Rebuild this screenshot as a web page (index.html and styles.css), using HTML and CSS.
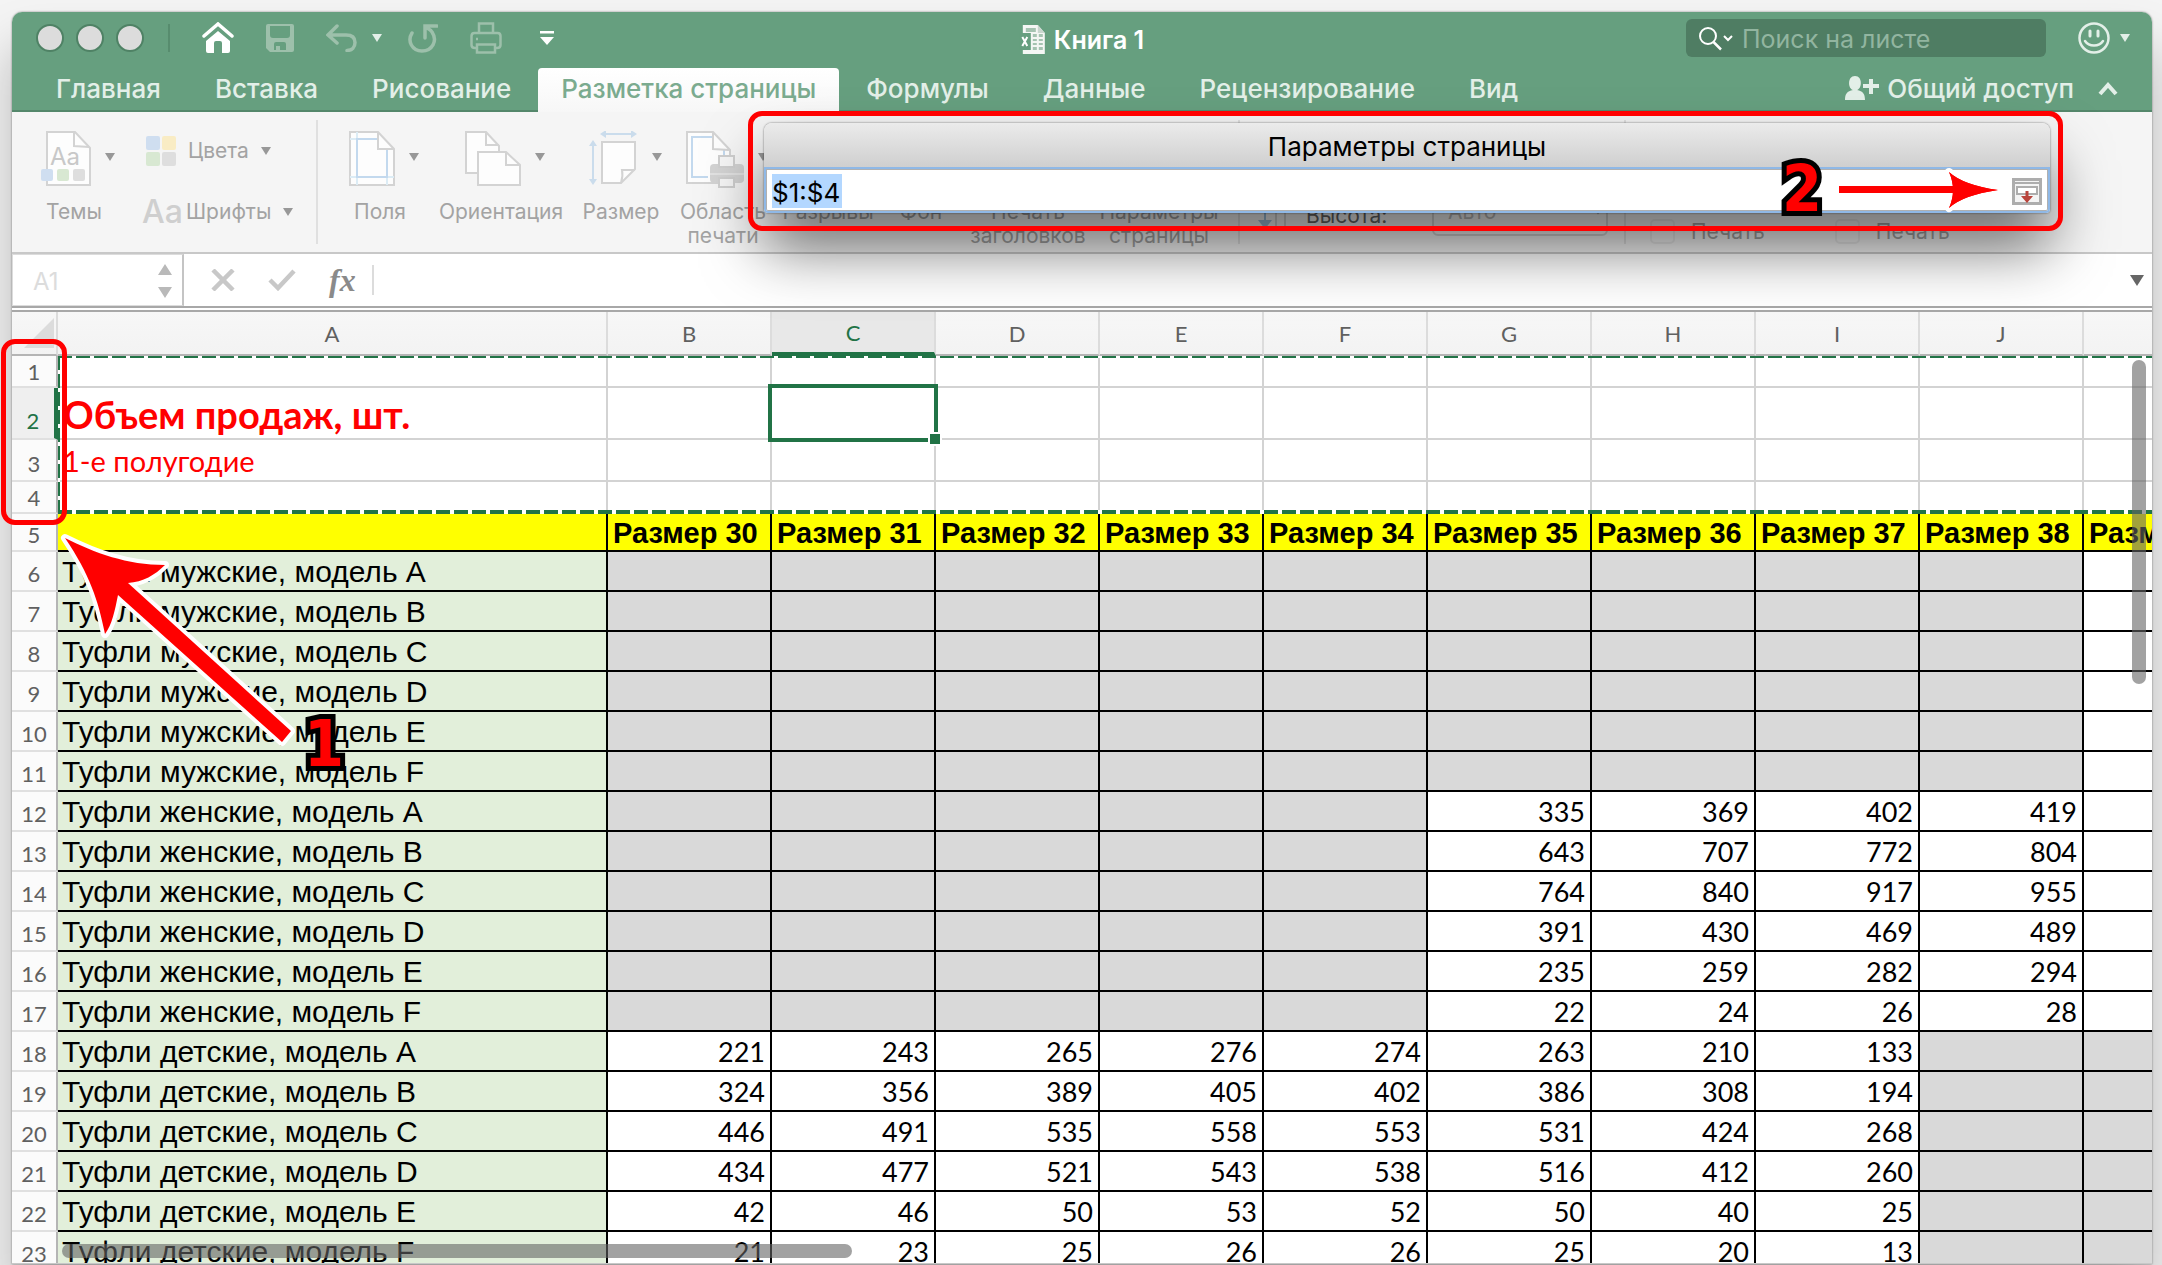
FILE: index.html
```html
<!DOCTYPE html>
<html lang="ru">
<head>
<meta charset="utf-8">
<title>Книга 1</title>
<link rel="stylesheet" href="styles.css">
</head>
<body>
<div class="window">
  <header class="titlebar">
    <div class="top-row">
      <div class="lights"><span class="light"></span><span class="light"></span><span class="light"></span></div>
      <div class="quick">
        <button class="icon-btn" aria-label="Домой"><svg width="32" height="32" viewBox="0 0 32 32"><path d="M2 14 16 2l14 12" fill="none" stroke="#fff" stroke-width="3.500" stroke-linecap="round"/><path d="M16 9 4 19v10q0 2 2 2h6V21q0-2 2-2h4q2 0 2 2v10h6q2 0 2-2V19z" fill="#fff"/></svg></button>
        <button class="icon-btn" aria-label="Сохранить"><svg width="28" height="28" viewBox="0 0 28 28"><path fill-rule="evenodd" d="M2 0h24q2 0 2 2v24q0 2-2 2H4l-4-4V2q0-2 2-2zm2 2v9q0 3 3 3h14q3 0 3-3V2zm6 16q-2 0-2 2v6h2v-4h4v4h6v-6q0-2-2-2z" fill="#9dc0ab"/></svg></button>
        <button class="icon-btn undo" aria-label="Отменить"><svg width="32" height="28" viewBox="0 0 32 28" fill="none" stroke="#9dc0ab" stroke-width="3.500" stroke-linecap="round"><path d="M11 2 2 11l9 8M3 11h17c6 0 9 3 9 7.500s-3 8-8 8"/></svg><i class="caret light-caret"></i></button>
        <button class="icon-btn" aria-label="Повторить"><svg width="30" height="30" viewBox="0 0 30 30" fill="none" stroke="#9dc0ab" stroke-width="3.500" stroke-linecap="round"><path d="M4 10C-1 18 4 28 14 28s16-10 10-19c-1-2-3-3-5-4M17 15V3h12"/></svg></button>
        <button class="icon-btn" aria-label="Печать"><svg width="32" height="32" viewBox="0 0 32 32" fill="none" stroke="#9dc0ab" stroke-width="2.500"><path d="M9 11V1.500h14V11M7 26H5c-2 0-3.500-1-3.500-3V14c0-2 1-3 3-3h23c2 0 3 1 3 3v9c0 2-1.500 3-3.500 3h-2"/><path d="M7 22.500h18v8H7zM6 17h2"/></svg></button>
        <button class="icon-btn customize" aria-label="Настроить панель"><svg width="14" height="14" viewBox="0 0 14 14" fill="#fff"><path d="M0 0h14v2.500H0zM0 6h14l-7 8z"/></svg></button>
      </div>
      <h1 class="doc-title"><svg width="26" height="30" viewBox="0 0 26 30"><path d="M3 0h15l7 8v21H3z" fill="#f4f6f4"/><path d="M18 0v8h7z" fill="#c9d6ce"/><path d="M6 3h10v4H6zM13 9h4v3h-4zM19 9h4v3h-4zM13 14h4v2h-4zM19 14h4v2h-4zM13 18h4v2h-4zM19 18h4v2h-4zM13 22h4v3h-4zM19 22h4v3h-4z" fill="#a5c3b1"/><path d="M0 8h11v17H0z" fill="#669f7f"/><path d="M2.500 12l5 9M7.500 12l-5 9" stroke="#fff" stroke-width="2"/></svg>Книга 1</h1>
      <label class="search"><svg width="36" height="26" viewBox="0 0 36 26" fill="none" stroke="#fff" stroke-width="2"><circle cx="10" cy="10" r="8"/><path d="M15.500 16 23 23.500" stroke-width="2.500"/><path d="m26 10 4 4 4-4"/></svg><input type="text" placeholder="Поиск на листе" aria-label="Поиск на листе"></label>
      <button class="icon-btn smile" aria-label="Отзыв"><svg width="32" height="32" viewBox="0 0 32 32" fill="none" stroke="#e3efe8" stroke-width="2.500"><circle cx="16" cy="16" r="14.500"/><path d="M12 9v5M20 9v5" stroke-width="3" stroke-linecap="round"/><path d="M7 19c4 6 14 6 18 0" stroke-linecap="round"/></svg><i class="caret light-caret"></i></button>
    </div>
    <nav class="tabs">
      <a href="#" class="tab">Главная</a><a href="#" class="tab">Вставка</a><a href="#" class="tab">Рисование</a><a href="#" class="tab active">Разметка страницы</a><a href="#" class="tab">Формулы</a><a href="#" class="tab">Данные</a><a href="#" class="tab">Рецензирование</a><a href="#" class="tab">Вид</a>
      <button class="share"><svg width="34" height="26" viewBox="0 0 34 26" fill="#e3efe8"><path d="M10 0c8 0 7 13 2 14 6 1 8 4 8 10H0c0-6 2-9 8-10C3 13 2 0 10 0z"/><path d="M24 3h4v5h6v4h-6v6h-4v-6h-6V8h6z"/></svg>Общий доступ</button>
      <button class="icon-btn collapse" aria-label="Свернуть ленту"><svg width="20" height="14" viewBox="0 0 20 14" fill="none" stroke="#e3efe8" stroke-width="4"><path d="m2 12 8-9 8 9"/></svg></button>
    </nav>
  </header>

  <section class="ribbon">
    <div class="group">
      <button class="tool themes"><span class="pic"><svg width="50" height="56" viewBox="0 0 50 56"><path d="M6 1h28l15 16v37H6z" fill="#fdfdfd" stroke="#d3d3d3" stroke-width="2"/><path d="M33 1v14l15 1" fill="none" stroke="#d3d3d3" stroke-width="2"/><text x="9" y="34" class="aa-small">Aa</text><rect x="0" y="38" width="12" height="12" rx="2" fill="#cfdef0"/><rect x="16" y="38" width="12" height="12" rx="2" fill="#d8e8d2"/><rect x="32" y="38" width="12" height="12" rx="2" fill="#dedede"/></svg><i class="caret"></i></span><span>Темы</span></button>
      <div class="stack">
        <button class="line-tool"><svg width="30" height="30" viewBox="0 0 30 30"><rect width="14" height="14" rx="2" fill="#cfdef0"/><rect x="16" width="14" height="14" rx="2" fill="#f9ecc4"/><rect y="16" width="14" height="14" rx="2" fill="#d8e8d2"/><rect x="16" y="16" width="14" height="14" rx="2" fill="#dedede"/></svg><span>Цвета</span><i class="caret"></i></button>
        <button class="line-tool"><b class="aa">Aa</b><span>Шрифты</span><i class="caret"></i></button>
      </div>
    </div>
    <div class="group pages">
      <button class="tool margins"><span class="pic"><svg width="46" height="56" viewBox="0 0 46 56" fill="none" stroke-width="2"><path d="M1 1h28l16 17v36H1z" fill="#fdfdfd" stroke="#d3d3d3"/><path d="M8 1v53M1 8h28M1 46h44M38 18v36" stroke="#dcecf5"/><path d="M28 8H8v38h30V18" stroke="#c3d9ee"/><path d="M29 1v17h16" stroke="#d3d3d3"/></svg><i class="caret"></i></span><span>Поля</span></button>
      <button class="tool orient"><span class="pic"><svg width="56" height="56" viewBox="0 0 56 56" fill="#fdfdfd" stroke="#d3d3d3" stroke-width="2"><path d="M1 1h20l13 14v27H1z"/><path d="M21 1v13h13" fill="none"/><path d="M13 21h28l14 13v20H13z"/><path d="M41 21v13h14" fill="none"/></svg><i class="caret"></i></span><span>Ориентация</span></button>
      <button class="tool size"><span class="pic"><svg width="50" height="56" viewBox="0 0 50 56" fill="none" stroke-width="2"><path d="M14 11h33v27L33 52H14z" fill="#fdfdfd" stroke="#d3d3d3"/><path d="M33 52c1-3 2-8 1-13h13" stroke="#d3d3d3"/><path d="M16 3h29M5 14v35" stroke="#cadcec"/><path d="m18-1-6 4 6 4zM43-1l6 4-6 4zM1 15l4-6 4 6zM1 48l4 6 4-6z" fill="#cadcec"/></svg><i class="caret"></i></span><span>Размер</span></button>
      <button class="tool area"><span class="pic"><svg width="58" height="58" viewBox="0 0 58 58" fill="none" stroke-width="2"><path d="M1 1h26l17 18v33H1z" fill="#fdfdfd" stroke="#d3d3d3"/><path d="M26 6H6v40h16M38 19v8" stroke="#c3d9ee"/><path d="M27 1v17l16 1" stroke="#d3d3d3"/><rect x="24" y="33" width="34" height="19" rx="4" fill="#d3d3d3"/><path d="M24 43h34" stroke="#e2e2e2"/><path d="M33 25h15v11H33zM33 47h15v9H33z" fill="#f6f6f6" stroke="#cfcfcf"/></svg><i class="caret"></i></span><span>Область<br>печати</span></button>
      <button class="tool breaks"><span class="pic"></span><span>Разрывы</span></button>
      <button class="tool backdrop"><span class="pic"></span><span>Фон</span></button>
      <button class="tool titles"><span class="pic"></span><span>Печать<br>заголовков</span></button>
      <button class="tool setup"><span class="pic"></span><span>Параметры<br>страницы</span></button>
    </div>
    <div class="group scale">
      <svg width="34" height="56" viewBox="0 0 34 56" fill="none" stroke-width="2"><path d="M7 0v42" stroke="#9fc0dc"/><path d="M0 40h14l-7 9z" fill="#9fc0dc"/><path d="M18 0v49M27 0v49" stroke="#d3d3d3"/></svg>
      <label for="height">Высота:</label>
      <select id="height" disabled><option>Авто</option></select>
    </div>
    <div class="group checks">
      <label><input type="checkbox" disabled>Печать</label>
      <label><input type="checkbox" disabled>Печать</label>
    </div>
  </section>

  <section class="formula">
    <div class="name-box"><input type="text" value="A1" aria-label="Имя ячейки"><svg width="14" height="34" viewBox="0 0 14 34" fill="#b9b9b9"><path d="m0 11 7-11 7 11zM0 23h14L7 34z"/></svg></div>
    <button class="icon-btn" aria-label="Отмена"><svg width="24" height="22" viewBox="0 0 24 22" stroke="#c8c8c8" stroke-width="4.500"><path d="m2 1 20 20M22 1 2 21"/></svg></button>
    <button class="icon-btn" aria-label="Ввод"><svg width="28" height="22" viewBox="0 0 28 22" fill="none" stroke="#c8c8c8" stroke-width="4.500"><path d="m2 11 8 8L26 2"/></svg></button>
    <button class="fx" aria-label="Вставить функцию"><i>fx</i></button>
    <input class="formula-input" type="text" aria-label="Строка формул">
    <button class="icon-btn" aria-label="Развернуть"><i class="caret big"></i></button>
  </section>

  <main class="sheet">
    <table>
      <colgroup><col class="c-num"><col class="c-name"><col class="c-val"><col class="c-val"><col class="c-val"><col class="c-val"><col class="c-val"><col class="c-val"><col class="c-val"><col class="c-val"><col class="c-val"><col></colgroup>
      <thead><tr><th class="corner"><svg width="30" height="30" viewBox="0 0 30 30"><path d="M30 0v30H0z" fill="#dcdcdc"/></svg></th><th>A</th><th>B</th><th class="picked">C</th><th>D</th><th>E</th><th>F</th><th>G</th><th>H</th><th>I</th><th>J</th><th></th></tr></thead>
      <tbody id="rows"></tbody>
    </table>
    <div class="ants ants-top"></div>
    <div class="ants ants-left"></div>
    <div class="ants ants-bottom"></div>
    <div class="selection"></div>
    <div class="bar bar-v"></div>
    <div class="bar bar-h"></div>
  </main>
</div>

<section class="dialog">
  <h2>Параметры страницы</h2>
  <div class="field"><input type="text" value="$1:$4" aria-label="Диапазон"><button class="icon-btn" aria-label="Развернуть диалог"><svg width="30" height="27" viewBox="0 0 30 27" fill="none"><path d="M1.500 1.500h27v24h-27z" fill="#f4f4f4" stroke="#adadad" stroke-width="3"/><path d="M1 5h28" stroke="#adadad" stroke-width="2"/><path d="M5 9h20v7H5z" fill="#fff" stroke="#adadad" stroke-width="2"/><path d="M15 13v8" stroke="#b9443c" stroke-width="3"/><path d="M9 18h12l-6 7z" fill="#b9443c"/></svg></button></div>
</section>

<div class="mark mark-rows"></div>
<div class="mark mark-dialog"></div>
<svg class="arrow arrow-rows" width="260" height="230" viewBox="50 525 260 230"><path d="M65 538C95 553 127 565 165 565 155 575 143 582 128 583L291 731 282 742 118 595C115 610 112 625 105 634 98 600 90 575 65 538z"/></svg>
<svg class="arrow arrow-dialog" width="180" height="60" viewBox="1830 160 180 60"><path d="M1949 172q14 13 49 18-35 5-49 18 8-18 0-36z"/><path class="flat" d="M1839 186h116v7h-116z"/><path class="flat" d="M1949 172q14 13 49 18-35 5-49 18 8-18 0-36z"/></svg>
<b class="digit digit-rows">1</b>
<b class="digit digit-dialog">2</b>
<script src="sheet.js"></script>
</body>
</html>
```
FILE: styles.css
```css
*, *::after { box-sizing: border-box; }
body {
  margin: 0;
  height: 100vh;
  padding: 12px 10px 1px 12px;
  overflow: hidden;
  position: relative;
  background: #f4f4f4;
  font-family: Inter, "Liberation Sans", sans-serif;
}
button, input, select { font: inherit; color: inherit; border: 0; background: none; padding: 0; margin: 0; outline: 0; }
svg { display: block; flex: none; }
h1, h2 { margin: 0; }

.window {
  height: 100%;
  display: flex;
  flex-direction: column;
  background: #fff;
  border-radius: 10px 10px 0 0;
  box-shadow: 0 0 2px rgba(0,0,0,.5), 0 36px 50px rgba(0,0,0,.25);
}
.titlebar {
  height: 100px;
  flex: none;
  background: #669f7f;
  border-bottom: 2px solid #54876b;
  border-radius: 10px 10px 0 0;
  display: flex;
  flex-direction: column;
  color: #e3efe8;
}
.top-row { height: 56px; display: flex; align-items: center; padding: 0 22px 4px 24px; position: relative; }
.lights { display: flex; gap: 12px; padding-right: 24px; border-right: 2px solid #578c6e; }
.light { width: 28px; height: 28px; border-radius: 50%; background: #dcdcdc; border: 2px solid #4f8265; }
.quick { display: flex; align-items: center; gap: 32px; padding-left: 32px; }
.icon-btn { display: flex; align-items: center; gap: 14px; }
.undo { margin-right: -6px; }
.customize { margin-left: 6px; }
.caret { width: 0; height: 0; border: 5px solid transparent; border-top: 8px solid #989898; border-bottom: 0; flex: none; }
.light-caret { border-top-color: #e3efe8; }
.doc-title {
  position: absolute; left: 50%; top: 10px; transform: translateX(-50%);
  display: flex; align-items: center; gap: 8px;
  font-size: 25px; line-height: 36px; font-weight: 600; color: #fff;
}
.search {
  margin-left: auto; width: 360px; height: 38px; padding: 2px 12px 0;
  display: flex; align-items: center; gap: 8px;
  background: #4f7d63; border-radius: 6px; font-size: 25px;
}
.search input { width: 100%; }
.search input::placeholder { color: #92b5a0; opacity: 1; }
.smile { margin-left: 32px; gap: 10px; }
.tabs { flex: 1; display: flex; align-items: stretch; padding: 0 34px 0 17px; font-size: 26px; font-weight: 500; line-height: 42px; }
.tab { padding: 0 27px; color: inherit; text-decoration: none; }
.tab.active { margin-bottom: -2px; padding: 0 23px; background: linear-gradient(#fff, #f7f7f7); color: #7bab8f; border-radius: 4px 4px 0 0; }
.share { margin-left: auto; display: flex; align-items: center; gap: 8px; }
.collapse { margin-left: 24px; }

.ribbon {
  height: 142px; flex: none;
  display: flex;
  padding: 8px 0;
  background: #f5f5f5;
  border-bottom: 2px solid #c8c8c8;
  font-size: 21px; line-height: 24px; color: #a3a3a3;
}
.group { display: flex; flex: none; height: 124px; }
.group + .group { border-left: 2px solid #e0e0e0; }
.tool { display: flex; flex-direction: column; align-items: center; justify-content: flex-start; flex: none; white-space: nowrap; }
.pic { height: 69px; flex: none; margin: 11px 0 0; padding-left: 8px; display: flex; align-items: flex-start; gap: 14px; }
.pic .caret { margin-top: 22px; }
.themes { width: 124px; }
.stack { width: 180px; padding: 16px 0 0 10px; display: flex; flex-direction: column; gap: 31px; }
.line-tool { display: flex; align-items: center; height: 30px; gap: 12px; }
.aa { width: 36px; margin: 0 -4px 0 -4px; font-weight: 500; font-size: 32px; color: #cfcfcf; }
.aa-small { font-size: 24px; fill: #c8c8c8; }
.pages { padding: 0 20px 0 6px; }
.margins { width: 112px; }
.orient { width: 130px; }
.size { width: 110px; }
.area { width: 94px; }
.breaks { width: 116px; }
.backdrop { width: 70px; }
.titles { width: 144px; }
.setup { width: 118px; }
.scale { width: 386px; align-items: flex-end; padding: 0 16px 8px 18px; gap: 14px; color: #666; }
.scale label { margin-bottom: 8px; }
.scale select { width: 176px; height: 50px; margin-left: auto; padding: 0 10px; border: 2px solid #d3d3d3; border-radius: 6px; color: #bbb; opacity: 1; }
.checks { align-items: flex-end; padding: 0 24px; gap: 70px; }
.checks label { display: flex; align-items: center; gap: 16px; }
.checks input { appearance: none; width: 25px; height: 25px; border: 2px solid #e8e8e8; border-radius: 5px; }

.formula {
  height: 58px; flex: none;
  display: flex; align-items: center;
  padding-right: 8px;
  border-bottom: 6px double #a8a8a8;
  gap: 33px;
}
.name-box { width: 172px; height: 52px; display: flex; align-items: center; padding: 2px 10px 0 20px; border: 1px solid #dcdcdc; border-right: 2px solid #c4c4c4; font-size: 24px; color: #dcdcdc; margin-right: -6px; }
.name-box input { flex: 1; width: 0; }
.fx { font: bold 32px "Liberation Serif", serif; color: #8a8a8a; padding-right: 16px; border-right: 2px solid #dcdcdc; line-height: 30px; }
.formula-input { flex: 1; }
.caret.big { border-width: 7px; border-top: 11px solid #666; border-bottom: 0; }

.sheet { flex: 1; min-height: 0; position: relative; overflow: hidden; border-bottom: 1px solid #c8c8c8; }
table { width: 100%; table-layout: fixed; border-spacing: 0; }
.c-num { width: 46px; }
.c-name { width: 550px; }
.c-val { width: 164px; }
th, td { padding: 0; overflow: hidden; white-space: nowrap; border-right: 2px solid #d3d3d3; border-bottom: 2px solid #d3d3d3; }
thead th { height: 44px; font: 22px Lato, "Noto Sans", sans-serif; color: #606060; background: linear-gradient(#f7f7f7, #f3f3f3); border-color: #dcdcdc; border-bottom-color: #b5b5b5; }
thead .picked { background: #e8e8e8; color: #217346; border-bottom: 4px solid #217346; }
.corner svg { margin: 0 0 0 12px; }
tbody th { font: 22px Lato, "Noto Sans", sans-serif; color: #606060; background: #fbfbfb; vertical-align: bottom; border-color: #e0e0e0; border-right-color: #b5b5b5; line-height: 32px; }
tbody th.picked { background: #efefef; color: #217346; border-right: 4px solid #217346; line-height: 34px; }
td { padding: 0 5px; font: 27px Lato, "Noto Sans", sans-serif; line-height: 36px; text-align: right; vertical-align: bottom; }
td:last-child, thead th:last-child { border-right: 0; }
.h32 > * { height: 32px; line-height: 28px; }
.h52 > * { height: 52px; }
.h42 > * { height: 42px; }
.h38 > * { height: 38px; line-height: 30px; }
.h40 > * { height: 40px; }
.filled td { border-color: #000; }
.filled td:nth-child(2) { padding-left: 4px; text-align: left; background: #e2efda; font: 30px "Liberation Sans", sans-serif; line-height: 36px; }
.sizes td, .filled.sizes td:nth-child(2) { background: #ff0; font: bold 29px "Liberation Sans", sans-serif; line-height: 34px; text-align: left; }
.filled td.off { background: #d9d9d9; }
.title { text-align: left; color: #f00; font-weight: 700; font-size: 38px; line-height: 48px; }
.subtitle { text-align: left; color: #f00; font-size: 29px; line-height: 38px; }

.ants { position: absolute; }
.ants-top { top: 44px; left: 46px; right: 0; height: 2px; background: repeating-linear-gradient(90deg, #217346 0 14px, #fff 14px 18px); }
.ants-left { top: 44px; left: 46px; width: 2px; height: 158px; background: repeating-linear-gradient(#217346 0 14px, #fff 14px 18px); }
.ants-bottom { top: 198px; left: 46px; right: 0; height: 4px; background: repeating-linear-gradient(90deg, #217346 0 14px, #fff 14px 18px); }
.selection { position: absolute; left: 756px; top: 72px; width: 170px; height: 58px; border: 4px solid #217346; }
.selection::after { content: ""; position: absolute; right: -8px; bottom: -8px; width: 14px; height: 14px; background: #217346; border: 2px solid #fff; }
.bar { position: absolute; background: rgba(100,100,100,.6); border-radius: 7px; }
.bar-v { right: 6px; top: 48px; width: 14px; height: 324px; }
.bar-h { left: 50px; bottom: 5px; width: 790px; height: 14px; }

.dialog {
  position: absolute; left: 764px; right: 112px; top: 123px;
  border-radius: 8px 8px 4px 4px;
  box-shadow: 0 0 2px rgba(0,0,0,.6), 0 36px 60px rgba(0,0,0,.55);
  background: #fff;
}
.dialog h2 { height: 44px; line-height: 48px; text-align: center; font-size: 26px; font-weight: 400; color: #000; background: linear-gradient(#ebebeb, #cfcfcf); border-radius: 8px 8px 0 0; }
.field { height: 46px; padding: 2px 6px 0; display: flex; align-items: center; justify-content: space-between; border: 2px solid #8fb8e6; box-shadow: inset 0 0 0 1px #b0b0b0; border-radius: 0 0 4px 4px; font-size: 26px; }
.field input { width: 70px; height: 34px; padding-top: 2px; background: #b3d7ff; color: #000; }

.mark { position: absolute; border: 5px solid #f00; border-radius: 14px; }
.mark-rows { left: 1px; top: 339px; width: 66px; height: 186px; }
.mark-dialog { left: 748px; right: 99px; top: 111px; height: 120px; }
.arrow { position: absolute; fill: #f00; stroke: #fff; stroke-width: 8px; stroke-linejoin: round; paint-order: stroke; }
.arrow .flat { stroke: none; }
.arrow-rows { left: 50px; top: 525px; }
.arrow-dialog { right: 152px; top: 160px; }
.digit { position: absolute; font: bold 64px "DejaVu Sans Condensed", "DejaVu Sans", sans-serif; line-height: 72px; color: #f00; -webkit-text-stroke: 10px #000; paint-order: stroke fill; }
.digit-rows { left: 304px; top: 708px; }
.digit-dialog { right: 340px; top: 153px; }
```
FILE: sheet.js
```js
const kinds = ['мужские', 'женские', 'детские'];
const sizes = [30, 31, 32, 33, 34, 35, 36, 37, 38];
const women = [[335, 369, 402, 419], [643, 707, 772, 804], [764, 840, 917, 955], [391, 430, 469, 489], [235, 259, 282, 294], [22, 24, 26, 28]];
const kids = [
  [221, 243, 265, 276, 274, 263, 210, 133], [324, 356, 389, 405, 402, 386, 308, 194],
  [446, 491, 535, 558, 553, 531, 424, 268], [434, 477, 521, 543, 538, 516, 412, 260],
  [42, 46, 50, 53, 52, 50, 40, 25], [21, 23, 25, 26, 26, 25, 20, 13]
];
const off = n => Array(n).fill('<td class="off"></td>').join('');
const cells = a => a.map(v => `<td>${v}</td>`).join('');
const blank = '<td></td>'.repeat(10);
let html = `<tr class="h32"><th>1</th><td></td>${blank}</tr>
<tr class="h52"><th class="picked">2</th><td class="title">Объем продаж, шт.</td>${blank}</tr>
<tr class="h42"><th>3</th><td class="subtitle">1-е полугодие</td>${blank}</tr>
<tr class="h32"><th>4</th><td></td>${blank}</tr>
<tr class="h38 filled sizes"><th>5</th><td></td>${sizes.map(s => `<td>Размер ${s}</td>`).join('')}<td>Размер 39</td></tr>`;
kinds.forEach((kind, k) => [...'ABCDEF'].forEach((m, i) => {
  const body = k === 0 ? off(9) + '<td></td>' : k === 1 ? off(5) + cells(women[i]) + '<td></td>' : cells(kids[i]) + off(2);
  html += `<tr class="h40 filled"><th>${6 + k * 6 + i}</th><td>Туфли ${kind}, модель ${m}</td>${body}</tr>`;
}));
document.getElementById('rows').innerHTML = html;
```
